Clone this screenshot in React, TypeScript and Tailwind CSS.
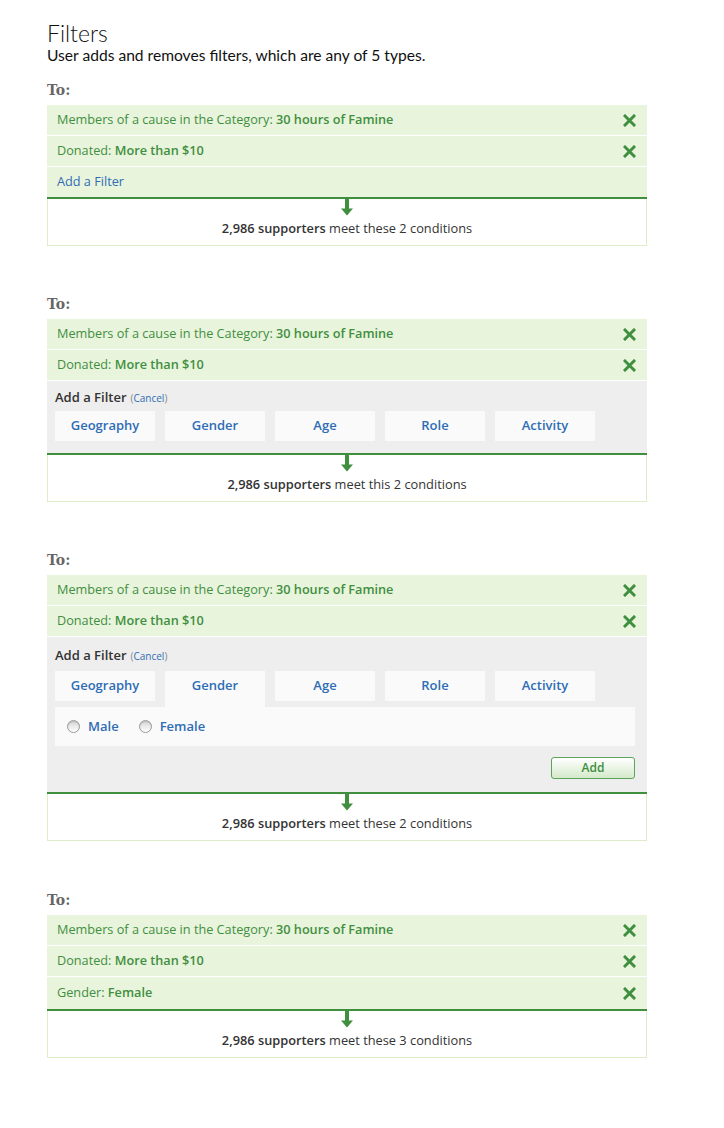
import React from 'react';

const font = { fontFamily: '"Open Sans", "DejaVu Sans", sans-serif' };

const XIcon = () => (
  <svg width="13" height="13" viewBox="0 0 13 13" className="shrink-0">
    <path d="M2 2 L11 11 M11 2 L2 11" stroke="#3f8f3f" strokeWidth="3" strokeLinecap="square" />
  </svg>
);

const Arrow = () => (
  <svg width="14" height="17" viewBox="0 0 14 17" className="block">
    <rect x="5" y="0" width="4" height="10" fill="#3f8f3f" />
    <path d="M1 9.5 L13 9.5 L7 16.5 Z" fill="#3f8f3f" />
  </svg>
);

const Radio = () => (
  <span className="inline-block w-[13px] h-[13px] rounded-full border border-[#9a9a9a] bg-gradient-to-b from-[#d6d6d6] to-[#ffffff] shadow-[inset_0_1px_1px_rgba(0,0,0,0.15)]" />
);

type Cond = { label: string; value: string };

const Row = ({ c }: { c: Cond }) => (
  <div className="h-[31px] border-b border-white bg-[#e9f4dc] flex items-center justify-between pl-[10px] pr-[11px]">
    <span className="text-[12.7px] text-[#3f8f3f]">
      {c.label}: <b className="font-semibold">{c.value}</b>
    </span>
    <XIcon />
  </div>
);

const Result = ({ text }: { text: string }) => (
  <div className="border-t-2 border-[#3f8f3f]">
    <div className="h-[47px] border-x border-b border-[#dcedc8] flex flex-col items-center bg-white">
      <Arrow />
      <div className="mt-[3px] text-[12.8px] text-[#333]">
        <b className="font-semibold">2,986 supporters</b> {text}
      </div>
    </div>
  </div>
);

const ToLabel = () => (
  <div
    className="text-[14px] font-bold text-[#666] h-[16px] leading-[16px] mb-[7px]"
    style={{ fontFamily: '"DejaVu Serif", "Liberation Serif", serif' }}
  >
    To:
  </div>
);

const types = ['Geography', 'Gender', 'Age', 'Role', 'Activity'];

const base: Cond[] = [
  { label: 'Members of a cause in the Category', value: '30 hours of Famine' },
  { label: 'Donated', value: 'More than $10' },
];

const AddLabel = () => (
  <div className="h-[18px] flex items-center text-[13px] font-semibold text-[#333]">
    Add a Filter
    <span className="ml-[4px] text-[10px] font-normal text-[#888]">
      (<span className="text-[#2e6db5]">Cancel</span>)
    </span>
  </div>
);

export default function App() {
  return (
    <div className="min-h-screen bg-white pl-[47px] pt-[20px] pb-[60px]" style={font}>
      <div className="w-[600px]">
        <h1 className="text-[23px] leading-[26px] text-[#111] font-light" style={{ fontFamily: 'Lato, sans-serif' }}>
          Filters
        </h1>
        <p className="text-[15.6px] leading-[18px] text-[#111] mb-[18px]" style={{ fontFamily: 'Lato, sans-serif' }}>
          User adds and removes filters, which are any of 5 types.
        </p>

        {/* 1: idle */}
        <ToLabel />
        {base.map((c) => <Row key={c.label} c={c} />)}
        <div className="h-[30px] bg-[#e9f4dc] flex items-center pl-[10px] text-[12.7px] text-[#2e6db5]">Add a Filter</div>
        <Result text="meet these 2 conditions" />

        {/* 2: open */}
        <div className="h-[50px]" />
        <ToLabel />
        {base.map((c) => <Row key={c.label} c={c} />)}
        <div className="bg-[#eeeeee] pl-[8px] pt-[8px] pb-[12px]">
          <AddLabel />
          <div className="flex gap-[10px] mt-[4px]">
            {types.map((t) => (
              <div key={t} className="w-[100px] h-[30px] bg-[#fafafa] flex items-center justify-center text-[13px] font-semibold text-[#2e6db5]">
                {t}
              </div>
            ))}
          </div>
        </div>
        <Result text="meet this 2 conditions" />

        {/* 3: gender picked */}
        <div className="h-[50px]" />
        <ToLabel />
        {base.map((c) => <Row key={c.label} c={c} />)}
        <div className="bg-[#eeeeee] pl-[8px] pr-[12px] pt-[10px] pb-[13px]">
          <AddLabel />
          <div className="flex gap-[10px] mt-[6px] items-start">
            {types.map((t) => (
              <div
                key={t}
                className={`w-[100px] bg-[#fafafa] flex items-center justify-center text-[13px] font-semibold text-[#2e6db5] ${t === 'Gender' ? 'h-[36px] pb-[6px]' : 'h-[30px]'}`}
              >
                {t}
              </div>
            ))}
          </div>
          <div className="h-[39px] bg-[#fafafa] flex items-center pl-[12px] text-[13px] font-semibold text-[#2e6db5]">
            <Radio />
            <span className="ml-[8px]">Male</span>
            <span className="ml-[20px] flex items-center">
              <Radio />
            </span>
            <span className="ml-[8px]">Female</span>
          </div>
          <div className="flex justify-end mt-[11px]">
            <button className="w-[84px] h-[22px] rounded-[3px] border border-[#5aa55a] bg-gradient-to-b from-[#ffffff] to-[#d5eacb] text-[12px] font-semibold text-[#3f8f3f]">
              Add
            </button>
          </div>
        </div>
        <Result text="meet these 2 conditions" />

        {/* 4: added */}
        <div className="h-[51px]" />
        <ToLabel />
        {base.map((c) => <Row key={c.label} c={c} />)}
        <div className="h-[32px] bg-[#e9f4dc] flex items-center justify-between pl-[10px] pr-[11px]">
          <span className="text-[12.7px] text-[#3f8f3f]">
            Gender: <b className="font-semibold">Female</b>
          </span>
          <XIcon />
        </div>
        <Result text="meet these 3 conditions" />
      </div>
    </div>
  );
}
